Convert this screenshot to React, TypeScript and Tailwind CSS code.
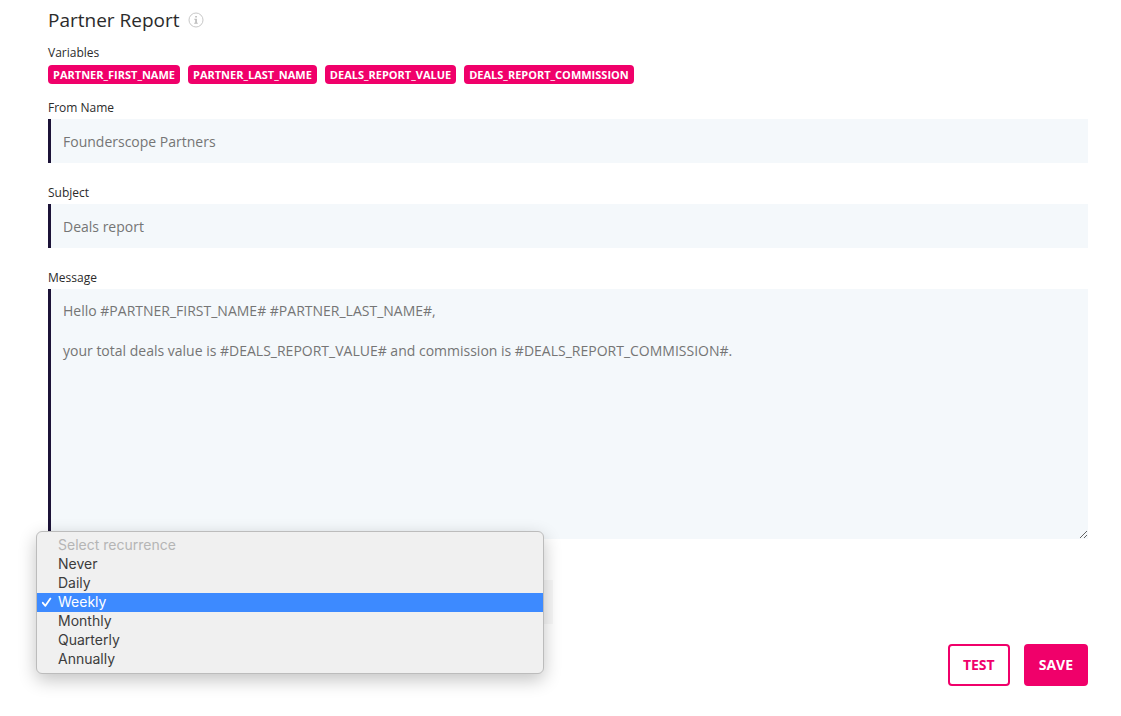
import { useState } from 'react';
import type { ReactNode } from 'react';

const variables = [
  'PARTNER_FIRST_NAME',
  'PARTNER_LAST_NAME',
  'DEALS_REPORT_VALUE',
  'DEALS_REPORT_COMMISSION',
];

const recurrences = ['Never', 'Daily', 'Weekly', 'Monthly', 'Quarterly', 'Annually'];

const defaultMessage = `Hello #PARTNER_FIRST_NAME# #PARTNER_LAST_NAME#,

your total deals value is #DEALS_REPORT_VALUE# and commission is #DEALS_REPORT_COMMISSION#.`;

const fieldClass =
  'block w-full border-l-[3px] border-[#1c1338] bg-[#f4f8fb] px-3 text-sm text-[#757575] outline-none';

interface FieldProps {
  id: string;
  label: string;
  children: ReactNode;
}

function Field({ id, label, children }: FieldProps) {
  return (
    <div>
      <label htmlFor={id} className="mb-[3px] block text-xs leading-4">
        {label}
      </label>
      {children}
    </div>
  );
}

function InfoIcon() {
  return (
    <svg width="16" height="16" viewBox="0 0 16 16" fill="none" aria-hidden="true">
      <circle cx="8" cy="8" r="7" stroke="#c8c8c8" />
      <path d="M7.2 4h1.7v1.5H7.2zM6.3 6.7h2.6v4h.9v1H6.2v-1h1V7.7h-.9z" fill="#bcbcbc" />
    </svg>
  );
}

function RecurrenceSelect() {
  const [value, setValue] = useState('Weekly');
  const [open, setOpen] = useState(true);

  return (
    <div className="relative">
      <select
        aria-label="Recurrence"
        value={value}
        onChange={(e) => setValue(e.target.value)}
        onFocus={() => setOpen(true)}
        className="block h-11 w-full appearance-none bg-[#f8f8f8] px-3 text-sm text-[#757575] outline-none"
      >
        {recurrences.map((item) => (
          <option key={item}>{item}</option>
        ))}
      </select>

      {open && (
        <div
          role="listbox"
          aria-label="Recurrence options"
          className="absolute -left-3 right-[9px] -top-[49px] rounded-md border border-[#bcbcbc] bg-[#f0f0f0] py-1 font-['Inter',sans-serif] text-sm leading-[17px] text-[#3c3c3c] shadow-[0_6px_18px_rgba(0,0,0,0.24)]"
        >
          <div className="pb-[2px] pl-[21px] text-[#b5b5b5]">Select recurrence</div>
          {recurrences.map((item) => (
            <button
              key={item}
              type="button"
              role="option"
              aria-selected={item === value}
              onClick={() => {
                setValue(item);
                setOpen(false);
              }}
              className="flex w-full items-center pb-[2px] text-left aria-selected:bg-[#3d8aff] aria-selected:text-white"
            >
              <span className="flex w-[21px] pl-1">
                {item === value && (
                  <svg width="12" height="12" viewBox="0 0 12 12" fill="none" aria-hidden="true">
                    <path
                      d="M1.8 6.8 4.4 9.8 9.4 2.6"
                      stroke="currentColor"
                      strokeWidth="1.8"
                      strokeLinecap="round"
                      strokeLinejoin="round"
                    />
                  </svg>
                )}
              </span>
              {item}
            </button>
          ))}
        </div>
      )}
    </div>
  );
}

export default function App() {
  return (
    <form
      onSubmit={(e) => e.preventDefault()}
      className="bg-white pt-2 pb-7 pl-12 pr-[33px] font-['Open_Sans',sans-serif] text-[#2b2b2b]"
    >
      <div className="flex items-center gap-2">
        <h1 className="text-[19px] leading-6">Partner Report</h1>
        <button type="button" aria-label="About this report">
          <InfoIcon />
        </button>
      </div>

      <p className="mt-[13px] text-xs leading-4">Variables</p>
      <div className="mt-1 flex flex-wrap gap-2">
        {variables.map((name) => (
          <span
            key={name}
            className="rounded-[4px] bg-[#f0006a] px-[5px] text-[11px] leading-[19px] font-bold text-white"
          >
            {name}
          </span>
        ))}
      </div>

      <div className="mt-4 flex flex-col gap-[22px]">
        <Field id="from-name" label="From Name">
          <input
            id="from-name"
            type="text"
            defaultValue="Founderscope Partners"
            className={`${fieldClass} h-11`}
          />
        </Field>
        <Field id="subject" label="Subject">
          <input id="subject" type="text" defaultValue="Deals report" className={`${fieldClass} h-11`} />
        </Field>
        <Field id="message" label="Message">
          <textarea
            id="message"
            defaultValue={defaultMessage}
            className={`${fieldClass} h-[250px] resize-y py-3 leading-5`}
          />
        </Field>
      </div>

      <div className="mt-[41px] grid grid-cols-2 gap-[30px]">
        <RecurrenceSelect />
      </div>

      <div className="mt-5 flex justify-end gap-[14px] text-sm font-bold">
        <button
          type="button"
          className="h-[42px] rounded-[4px] border-2 border-[#f0006a] px-[13px] text-[#f0006a]"
        >
          TEST
        </button>
        <button
          type="submit"
          className="h-[42px] rounded-[4px] border-2 border-[#f0006a] bg-[#f0006a] px-[13px] text-white"
        >
          SAVE
        </button>
      </div>
    </form>
  );
}
